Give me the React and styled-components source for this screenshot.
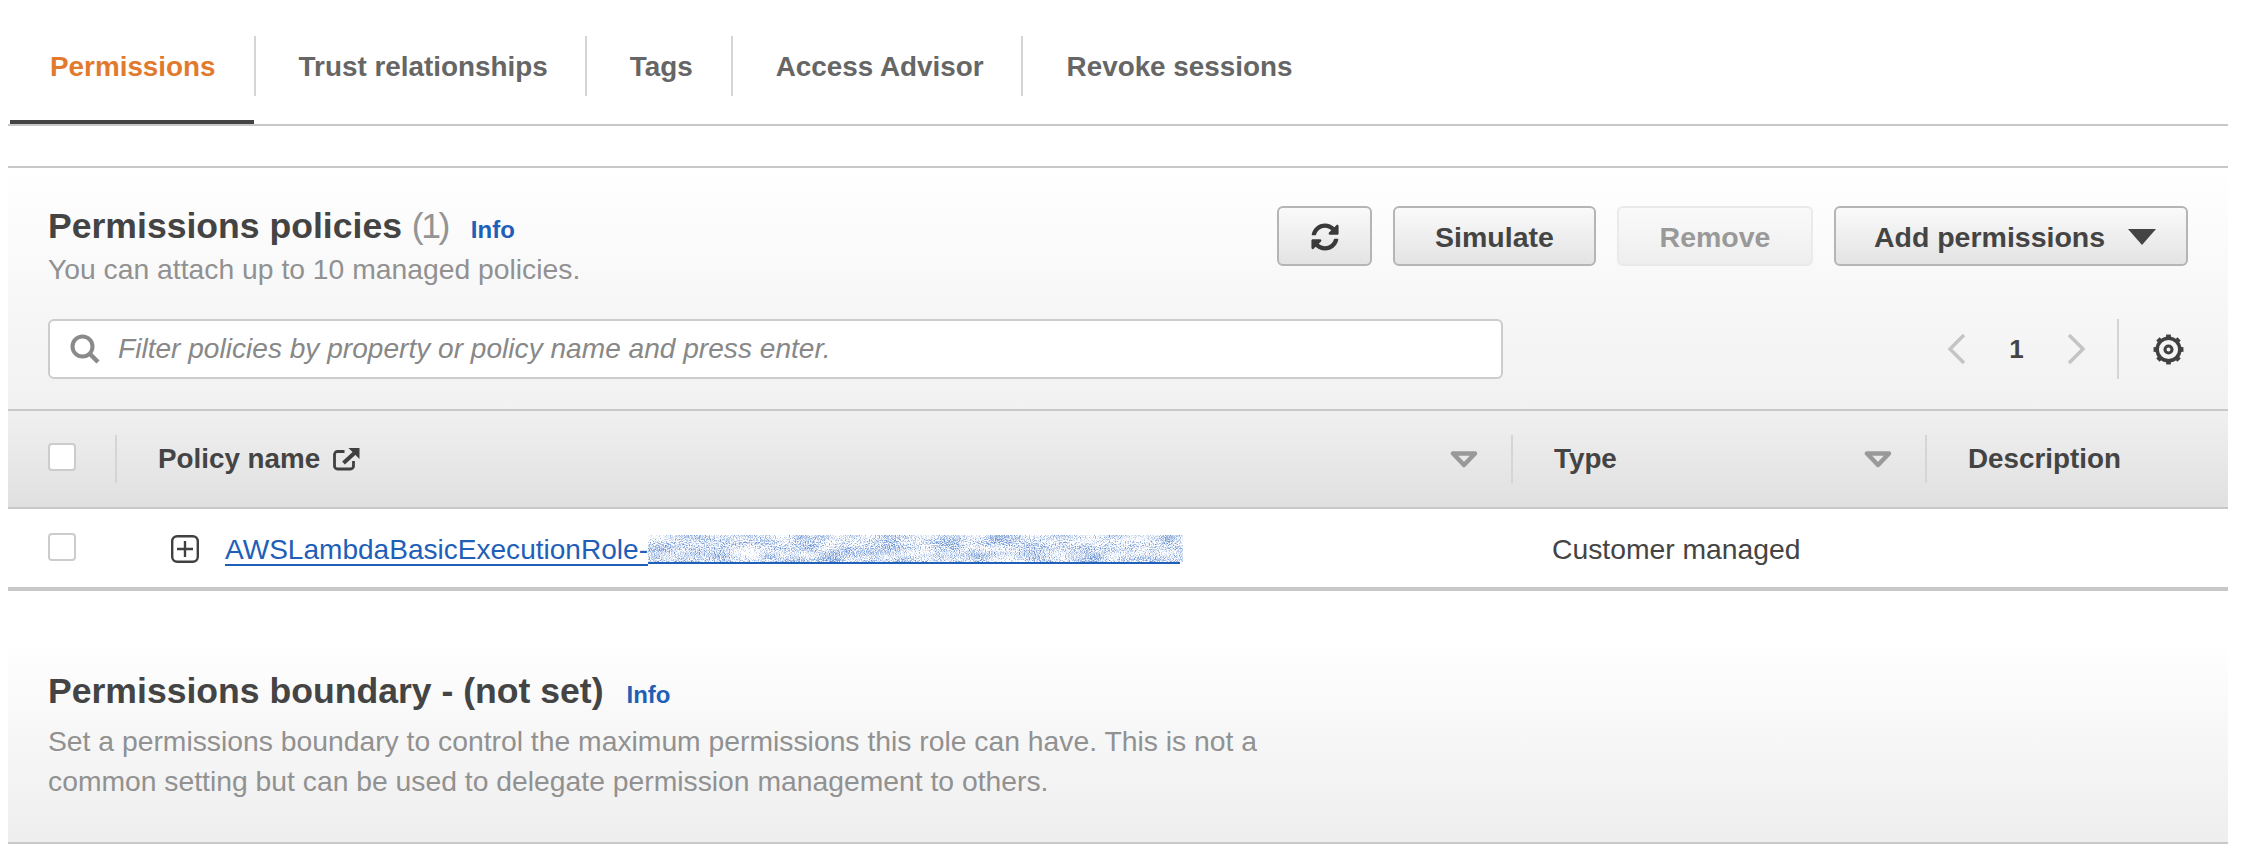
import React from "react";
import styled, { createGlobalStyle } from "styled-components";
import { FaSyncAlt } from "react-icons/fa";

const Global = createGlobalStyle`
  html, body { margin: 0; padding: 0; background: #fff; }
  body { font-family: "Liberation Sans", Arial, sans-serif; color: #444; }
  * { box-sizing: border-box; }
`;
const Page = styled.div`
  width: 2250px; height: 864px; padding-left: 8px; padding-right: 22px; overflow: hidden;
`;
const TabBar = styled.div`
  height: 126px; display: flex; align-items: flex-start; padding-top: 36px;
  border-bottom: 2px solid #c8c8c8; padding-left: 2px;
`;
const Tab = styled.div`
  height: 60px; display: flex; align-items: center; padding: 1px ${p => p.$pr}px 0 ${p => p.$pl}px;
  font-size: 27.85px; font-weight: 700; position: relative;
  color: ${p => (p.$active ? "#e27a2e" : "#666")};
  border-right: ${p => (p.$last ? "none" : "2px solid #d5d5d5")};
  ${p => p.$active && `&::after { content: ""; position: absolute; left: 0; right: 0; top: 84px; height: 4px; background: #444; }`}
`;
const Gap = styled.div` height: 40px; `;
const Section = styled.section`
  border-top: 2px solid #c8c8c8;
  height: 243px; padding: 35px 0 0 40px;
  background: linear-gradient(#fff 0%, #f1f1f1 100%);
`;
const HeadRow = styled.div` display: flex; justify-content: space-between; align-items: flex-start; padding-right: 40px; `;
const Title = styled.h2`
  margin: 0; font-size: 35.6px; line-height: 46px; font-weight: 700; color: #444;
  display: flex; align-items: baseline; white-space: pre;
`;
const Count = styled.span` font-weight: 400; color: #949494; letter-spacing: -2.5px; `;
const Info = styled.a`
  font-size: 24px; line-height: 1; font-weight: 700; color: #1f5fb8; margin-left: 23px;
`;
const Sub = styled.p`
  margin: ${p => p.$mt}px 0 0; font-size: 28.3px; line-height: 40px; color: #919191;
`;
const Actions = styled.div` display: flex; gap: 21px; padding-top: 3px; `;
const Btn = styled.button`
  height: 60px; width: ${p => p.$w}px; border-radius: 6px; padding: 2px 0 0 ${p => p.$pl || 0}px;
  font: 700 28.5px "Liberation Sans", Arial, sans-serif;
  display: flex; align-items: center; justify-content: center; gap: 22px;
  color: ${p => (p.$off ? "#999" : "#444")};
  border: 2px solid ${p => (p.$off ? "#eaeaea" : "#b5b5b5")};
  background: ${p => (p.$off ? "linear-gradient(#fafafa,#eee)" : "linear-gradient(#fafafa,#e3e3e3)")};
`;
const FilterRow = styled.div` display: flex; align-items: center; margin-top: 30px; height: 60px; `;
const Search = styled.div`
  width: 1455px; height: 60px; border: 2px solid #ccc; border-radius: 6px; background: #fff;
  display: flex; align-items: center; padding-left: 20px; gap: 18px;
  font-size: 28.1px; font-style: italic; color: #888;
`;
const Pager = styled.div`
  margin-left: 444px; display: flex; align-items: center; height: 60px;
  font-size: 26px; font-weight: 700; color: #444;
`;
const PageNum = styled.span` width: 101px; text-align: center; `;
const VLine = styled.div` width: 2px; height: 60px; background: #d5d5d5; margin: 0 33px 0 31px; `;
const Row = styled.div`
  display: grid; grid-template-columns: 109px 1396px 414px 1fr; align-items: stretch;
  height: ${p => p.$h}px; background: ${p => p.$head ? "linear-gradient(#f0f0f0,#e0e0e0)" : "#fff"};
  border-top: ${p => p.$head ? "2px solid #c8c8c8" : "none"};
  border-bottom: ${p => p.$b}px solid #c8c8c8;
  padding-top: ${p => p.$pt || 0}px;
`;
const Cell = styled.div`
  display: flex; align-items: center; padding-left: ${p => p.$pl || 0}px; padding-right: ${p => p.$pr || 0}px;
  font-size: ${p => p.$head ? 27.8 : 28.3}px; font-weight: ${p => p.$head ? 700 : 400};
  position: relative; color: #444;
  ${p => p.$div && `&::after { content: ""; position: absolute; right: 0; top: 24px; height: 48px; width: 2px; background: #d5d5d5; }`}
`;
const Check = styled.span`
  width: 28px; height: 28px; border: 2px solid #ccc; border-radius: 4px; background: #fff; display: block;
  margin-top: ${p => p.$mt || 0}px;
`;
const Spacer = styled.div` flex: 1; `;
const PolicyLink = styled.a`
  color: #1f5fb8; font-size: 28.05px; text-decoration: underline; text-underline-offset: 5px; text-decoration-thickness: 2px;
  display: inline-flex; align-items: center; margin-left: 26px; white-space: pre;
`;
const Redact = styled.svg`
  display: block; width: 535px; height: 29px;
`;
const ExpandIcon = styled.svg` margin-top: -1px; flex: none; `;
const ExternalIcon = styled.svg` margin-left: 12px; flex: none; `;
const Boundary = styled.section`
  margin-top: 49px; height: 204px; padding-top: 28px; padding-left: 40px;
  background: linear-gradient(#fff 0%, #eee 100%);
  border-bottom: 2px solid #c8c8c8;
`;

const Triangle = () => (
  <svg width="28" height="17" viewBox="0 0 28 17" fill="none"><path d="M3 2.5h22L14 14z" stroke="#999" strokeWidth="4.5" strokeLinejoin="round" /></svg>
);

const Gear = () => (
  <svg width="33" height="33" viewBox="0 0 32 32" fill="none" stroke="#404040">
    <circle cx="16" cy="16" r="11" strokeWidth="3.4" />
    <circle cx="16" cy="16" r="3.4" strokeWidth="3" />
    {[0, 45, 90, 135, 180, 225, 270, 315].map(a => (
      <path key={a} d="M16 1.5v4" strokeWidth="4.6" transform={`rotate(${a} 16 16)`} />
    ))}
  </svg>
);

export default function App() {
  return (
    <Page>
      <Global />
      <TabBar>
        <Tab $active $pl={40} $pr={38}>Permissions</Tab>
        <Tab $pl={43} $pr={37}>Trust relationships</Tab>
        <Tab $pl={43} $pr={38}>Tags</Tab>
        <Tab $pl={43} $pr={37}>Access Advisor</Tab>
        <Tab $pl={44} $pr={40} $last>Revoke sessions</Tab>
      </TabBar>
      <Gap />
      <Section>
        <HeadRow>
          <div>
            <Title>Permissions policies <Count>(1)</Count><Info>Info</Info></Title>
            <Sub $mt={0}>You can attach up to 10 managed policies.</Sub>
          </div>
          <Actions>
            <Btn $w={95} aria-label="Refresh"><FaSyncAlt size={28} color="#3a3a3a" /></Btn>
            <Btn $w={203}>Simulate</Btn>
            <Btn $w={196} $off>Remove</Btn>
            <Btn $w={354} $pl={9}>Add permissions
              <svg width="30" height="18" viewBox="0 0 30 18"><path d="M1 1h28L15 17z" fill="#444" /></svg>
            </Btn>
          </Actions>
        </HeadRow>
        <FilterRow>
          <Search>
            <svg width="30" height="30" viewBox="0 0 30 30" fill="none" stroke="#8a8a8a" strokeWidth="4"><circle cx="12.5" cy="12.5" r="10" /><path d="M19.5 19.5L28 28" strokeWidth="4.5" /></svg>
            Filter policies by property or policy name and press enter.
          </Search>
          <Pager>
            <svg width="19" height="30" viewBox="0 0 19 30" fill="none" stroke="#c4c4c4" strokeWidth="3.5"><path d="M17 1L3 15l14 14" /></svg>
            <PageNum>1</PageNum>
            <svg width="19" height="30" viewBox="0 0 19 30" fill="none" stroke="#c4c4c4" strokeWidth="3.5"><path d="M2 1l14 14L2 29" /></svg>
            <VLine />
            <Gear />
          </Pager>
        </FilterRow>
      </Section>
      <Row $head $h={100} $b={2}>
        <Cell $div $pl={40}><Check $mt={-4} /></Cell>
        <Cell $head $div $pl={41} $pr={35}>
          Policy name
          <ExternalIcon width="29" height="24" viewBox="0 0 28 24" fill="none" stroke="#404040" strokeWidth="2.8">
            <path d="M12 4.5H5a3 3 0 0 0-3 3V19a3 3 0 0 0 3 3h13a3 3 0 0 0 3-3v-5" />
            <path d="M11 16L22 6" strokeWidth="4" />
            <path d="M16 1h11v11z" fill="#404040" stroke="none" />
          </ExternalIcon>
          <Spacer />
          <Triangle />
        </Cell>
        <Cell $head $div $pl={41} $pr={35}>Type<Spacer /><Triangle /></Cell>
        <Cell $head $pl={41}>Description</Cell>
      </Row>
      <Row $h={82} $b={4} $pt={3}>
        <Cell $pl={40}><Check $mt={-5} /></Cell>
        <Cell $pl={54}>
          <ExpandIcon width="28" height="28" viewBox="0 0 28 28" fill="none" stroke="#404040" strokeWidth="2.4"><rect x="1.2" y="1.2" width="25.6" height="25.6" rx="5" /><path d="M14 6v16M6 14h16" /></ExpandIcon>
          <PolicyLink>AWSLambdaBasicExecutionRole-<Redact viewBox="0 0 535 29">
            <filter id="noise" x="0" y="0" width="100%" height="100%" colorInterpolationFilters="sRGB">
              <feTurbulence type="fractalNoise" baseFrequency="0.8 0.95" numOctaves="1" seed="4" />
              <feColorMatrix values="1 0 0 0 0  0 1 0 0 0  0 0 1 0 0  0 0 0 0 1" result="hi" />
              <feTurbulence type="fractalNoise" baseFrequency="0.035 0.09" numOctaves="2" seed="9" />
              <feColorMatrix values="1 0 0 0 0  0 1 0 0 0  0 0 1 0 0  0 0 0 0 1" result="lo" />
              <feComposite in="hi" in2="lo" operator="arithmetic" k1="0" k2="0.7" k3="0.3" k4="0" />
              <feColorMatrix values="0 0 0 0 0.2  0 0 0 0 0.42  0 0 0 0 0.76  4.5 0 0 0 -2.0" />
            </filter>
            <rect width="535" height="27" filter="url(#noise)" opacity="0.7" />
            <rect x="0" y="27" width="532" height="2" fill="#1f5fb8" />
          </Redact></PolicyLink>
        </Cell>
        <Cell $pl={39}>Customer managed</Cell>
        <Cell />
      </Row>
      <Boundary>
        <Title>Permissions boundary - (not set)<Info>Info</Info></Title>
        <Sub $mt={7}>Set a permissions boundary to control the maximum permissions this role can have. This is not a<br />common setting but can be used to delegate permission management to others.</Sub>
      </Boundary>
    </Page>
  );
}
